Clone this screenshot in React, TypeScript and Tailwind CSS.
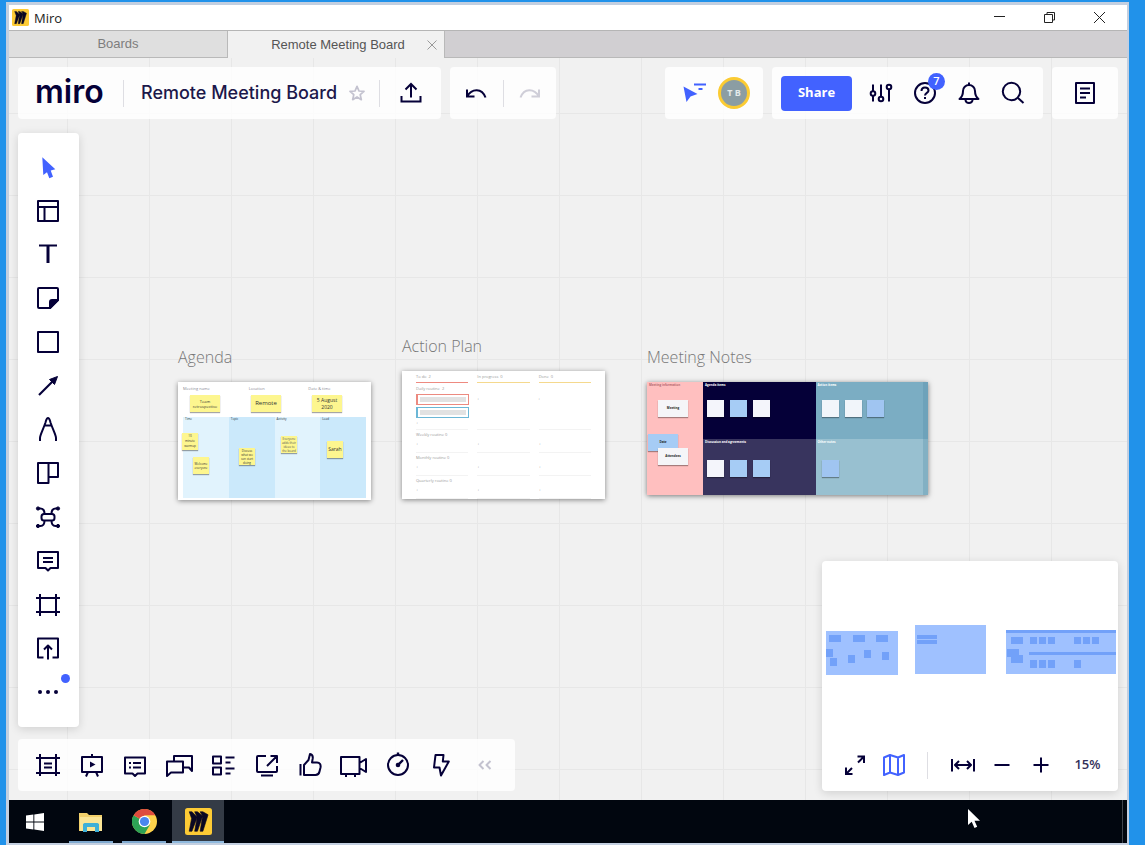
import type { ReactNode } from 'react';
import clsx from 'clsx';

type IconProps = { children: ReactNode; className?: string };

const Icon = ({ children, className = 'size-6' }: IconProps) => (
  <svg
    viewBox="0 0 24 24"
    fill="none"
    stroke="currentColor"
    strokeWidth="2"
    strokeLinejoin="round"
    className={clsx('shrink-0 overflow-visible', className)}
    aria-hidden="true"
  >
    {children}
  </svg>
);

const MiroMark = ({ className }: { className: string }) => (
  <svg viewBox="0 0 32 32" className={className} aria-hidden="true">
    <rect width="32" height="32" rx="3" fill="#fdcb35" />
    <path
      transform="translate(5 4.5) scale(.93 .96)"
      fill="#0a0722"
      stroke="#0a0722"
      strokeWidth=".8"
      d="M17.392 0H13.9L17 4.808 10.444 0H6.949l3.102 6.3L3.494 0H0l3.05 8.131L0 24h3.494L10.05 6.985 6.949 24h3.494L17 5.494 13.899 24h3.493L24 3.672 17.392 0z"
    />
  </svg>
);

const tools = [
  {
    name: 'Select',
    icon: (
      <path
        d="M6.3 2.3 19.3 14.3 14.7 15.4 17 21.7 13.3 23.3 11 17.3 7.3 20z"
        fill="#4262ff"
        stroke="none"
      />
    ),
  },
  { name: 'Templates', icon: <path d="M2 2h20v20H2zM2 8h20M8.5 8v14" /> },
  {
    name: 'Text',
    icon: (
      <>
        <path d="M3 3.5h18" />
        <path d="M12 3.5V21" strokeWidth="3" />
      </>
    ),
  },
  {
    name: 'Sticky note',
    icon: (
      <>
        <path d="M22 14V3a1 1 0 0 0-1-1H3a1 1 0 0 0-1 1v18a1 1 0 0 0 1 1h11z" />
        <path d="M22 14h-6a2 2 0 0 0-2 2v6z" fill="currentColor" />
      </>
    ),
  },
  { name: 'Shape', icon: <path d="M2 2h20v20H2z" /> },
  {
    name: 'Connection line',
    icon: (
      <>
        <path d="M3 21 17 7" strokeWidth="2.2" />
        <path d="M21.5 2.5 18.5 10.5 13.5 5.5z" fill="currentColor" strokeWidth="1" />
      </>
    ),
  },
  {
    name: 'Pen',
    icon: (
      <path d="M4 24v-3c0-3 3-8 5.5-15.5C10.2 3.2 10.5 1 12 1s1.8 2.2 2.5 4.5C17 13 20 18 20 21v3M8.5 8.5h7" />
    ),
  },
  { name: 'Kanban', icon: <path d="M12.5 16H22V2H2v20h10.5V2" /> },
  {
    name: 'Mind map',
    icon: (
      <>
        <rect x="5.5" y="9" width="13" height="6.5" rx="2.5" />
        <path d="M2 3.5h2.5c3 0 4 2 4 5.5M22 3.5h-2.500c-3 0-4 2-4 5.5M2 21h2.5c3 0 4-2 4-5.5M22 21h-2.500c-3 0-4-2-4-5.5" />
        <g fill="currentColor" strokeWidth="1">
          <circle cx="2" cy="3.5" r="1.6" />
          <circle cx="22" cy="3.5" r="1.6" />
          <circle cx="2" cy="21" r="1.6" />
          <circle cx="22" cy="21" r="1.6" />
        </g>
      </>
    ),
  },
  {
    name: 'Comment',
    icon: <path d="M2 3h20v16h-7.500L12 21.5 9.5 19H2zM7 9h10M7 13h10" />,
  },
  { name: 'Frame', icon: <path d="M0 5h24M0 19h24M4 1v22M20 1v22" /> },
  {
    name: 'Upload',
    icon: <path d="M7.5 21.5H2v-19h20v19h-5.500M12 23.5V10M8 13.5l4-4 4 4" />,
  },
  {
    name: 'More',
    icon: (
      <g fill="currentColor" stroke="none">
        <circle cx="4" cy="12" r="2" />
        <circle cx="12" cy="12" r="2" />
        <circle cx="20" cy="12" r="2" />
      </g>
    ),
    dot: true,
  },
];

const meetingTools = [
  { name: 'Frames', icon: <path d="M0 5h24M0 20h24M4 1v22M20 1v22M8 10.5h8M8 14.5h8" /> },
  {
    name: 'Present',
    icon: (
      <>
        <path d="M2 4h20v15H2zM12 1v3M8 19l-2 4.5M16 19l2 4.5" />
        <path d="M10 8.5v6l5.5-3z" fill="currentColor" stroke="none" />
      </>
    ),
  },
  {
    name: 'Comments',
    icon: <path d="M2 4.5h20v16h-7.500L12 23l-2.500-2.500H2zM6 10h2M10 10h8M6 14.5h2M10 14.5h8" />,
  },
  {
    name: 'Chat',
    icon: <path d="M7 8.5V3h18v15l-3-3.500h-6M0 8.500h16v11H4L0 23z" />,
  },
  {
    name: 'Cards',
    icon: (
      <path d="M2 3.5h8v7H2zM2 14.5h8v7H2zM14.5 4.5h9M14.5 9.5h5M14.5 15.5h9M14.5 20.5h5" />
    ),
  },
  {
    name: 'Screen sharing',
    icon: (
      <path d="M11 3H3a1 1 0 0 0-1 1v14a1 1 0 0 0 1 1h18a1 1 0 0 0 1-1v-5M12 13 22 3M15.5 3H22v7M6 22.5h12" />
    ),
  },
  {
    name: 'Voting',
    icon: (
      <path d="M2.5 11v11.5M6 22V12l4.5-5L12 1c2.600.5 3 2.500 2.700 4.500L14 9.500h5c3 0 4 2.500 3.500 5l-1 4c-.5 2.500-1.800 3.500-4 3.500z" />
    ),
  },
  {
    name: 'Video chat',
    icon: <path d="M-1 4h18.500v17H-1zM17.500 10l6.500-4v13l-6.500-4M4 21v3M13 21v3" />,
  },
  {
    name: 'Timer',
    icon: (
      <>
        <circle cx="12" cy="12" r="10" />
        <path d="M12 2V-.5M12 12l5-5" strokeWidth="2.4" />
        <circle cx="12" cy="12" r="2.3" fill="currentColor" stroke="none" />
      </>
    ),
  },
  {
    name: 'Activities',
    icon: <path d="M6.500 2h8l-.7 6.500h6L12 22.500 10.500 14.500H5z" />,
  },
  {
    name: 'Collapse',
    icon: <path d="M10.500 8l-4 4 4 4M17.500 8l-4 4 4 4" />,
    muted: true,
  },
];

const Divider = ({ className }: { className?: string }) => (
  <span className={clsx('h-[27px] w-px shrink-0 bg-[#dedee3]', className)} />
);

const Panel = ({ children, className }: IconProps) => (
  <div className={clsx('flex items-center rounded bg-white/85', className)}>{children}</div>
);

const IconButton = ({ label, children, className }: IconProps & { label: string }) => (
  <button
    type="button"
    aria-label={label}
    className={clsx('relative flex h-11 items-center justify-center', className)}
  >
    {children}
  </button>
);

const TitleBar = () => (
  <div className="flex h-[25px] shrink-0 items-center bg-white px-[3px]">
    <MiroMark className="size-[17px]" />
    <span className="ml-[5px] flex-1 text-[13px] leading-5 text-[#222]">Miro</span>
    {[
      ['Minimize', 'M1 5.5h11'],
      ['Restore', 'M1.5 3.5h8v8h-8zM4 3.5v-2h7.5V9h-2'],
      ['Close', 'M1 1l11 11M12 1 1 12'],
    ].map(([label, d]) => (
      <IconButton key={label} label={label} className="h-6 w-[50px]">
        <svg viewBox="0 0 13 13" className="size-[13px]" fill="none" stroke="#222" aria-hidden="true">
          <path d={d} />
        </svg>
      </IconButton>
    ))}
  </div>
);

const Tabs = () => (
  <nav className="flex h-7 shrink-0 border-t border-[#b5b5b5] bg-[#d1cfd2] font-['Liberation_Sans',sans-serif] text-[13px]">
    <a
      href="#boards"
      className="flex w-[219px] items-center justify-center border-r border-b border-[#b9b9b9] bg-[#dfdfdf] text-[#7d7d7d]"
    >
      Boards
    </a>
    <div className="flex w-[217px] items-center border-r border-[#b9b9b9] bg-[#f1f1f1]">
      <a href="#board" className="flex-1 pl-7 text-center text-[#555]">
        Remote Meeting Board
      </a>
      <button type="button" aria-label="Close tab" className="flex w-6 justify-center">
        <svg viewBox="0 0 10 10" className="size-[10px]" fill="none" stroke="#999" aria-hidden="true">
          <path d="M.5.5l9 9M9.5.5l-9 9" />
        </svg>
      </button>
    </div>
    <div className="flex-1 border-b border-[#b9b9b9]" />
  </nav>
);

const Note = ({ className, children }: { className: string; children?: ReactNode }) => (
  <div
    className={clsx(
      'absolute flex items-center justify-center text-center shadow-[0_1px_1px_rgba(0,0,0,0.35)]',
      className,
    )}
  >
    {children}
  </div>
);

const AgendaFrame = () => (
  <section className="absolute left-[169px] top-[289px] w-[193px]">
    <h2 className="mb-[15px] text-base leading-5 font-light text-[#777]">Agenda</h2>
    <div className="relative h-[118px] bg-white pt-1 text-[4px] leading-[5px] text-[#8a8a96] shadow-[0_1px_5px_rgba(0,0,0,0.45)]">
      <div className="grid grid-cols-3 pl-[5px]">
        <span>Meeting name</span>
        <span className="pl-[3px]">Location</span>
        <span>Date &amp; time</span>
      </div>
      <div className="absolute inset-x-[5px] top-[35px] bottom-[2px] grid grid-cols-4 text-[3px] text-[#234]">
        <span className="bg-[#e1f3fd] pl-0.5">Time</span>
        <span className="bg-[#cbe9fb] pl-0.5">Topic</span>
        <span className="bg-[#e1f3fd] pl-0.5">Activity</span>
        <span className="bg-[#cbe9fb] pl-0.5">Lead</span>
      </div>
      <Note className="left-3 top-[13px] h-[17px] w-[30px] bg-[#fdf68f] text-[4px] text-[#333]">
        Team
        <br />
        retrospective
      </Note>
      <Note className="left-[73px] top-[13px] h-[17px] w-[30px] bg-[#fdf68f] text-[6px] text-[#333]">
        Remote
      </Note>
      <Note className="left-[134px] top-[13px] h-[17px] w-[30px] bg-[#fdf68f] text-[5px] leading-[7px] text-[#333]">
        5 August
        <br />
        2020
      </Note>
      <Note className="left-1 top-[51px] h-[17px] w-4 bg-[#fdf68f] text-[3px] text-[#333]">
        10
        <br />
        minute
        <br />
        warmup
      </Note>
      <Note className="left-[15px] top-[75px] h-[17px] w-4 bg-[#fdf68f] text-[3px] leading-[4px] text-[#333]">
        Welcome
        <br />
        everyone
      </Note>
      <Note className="left-[61px] top-[66px] h-[17px] w-4 bg-[#fdf68f] text-[3px] leading-[4px] text-[#333]">
        Discuss
        <br />
        what we
        <br />
        can start
        <br />
        doing
      </Note>
      <Note className="left-[103px] top-[54px] h-[17px] w-4 bg-[#fdf68f] text-[3px] leading-[4px] text-[#555]">
        Everyone
        <br />
        adds their
        <br />
        ideas to
        <br />
        the board
      </Note>
      <Note className="left-[149px] top-[59px] h-[17px] w-4 bg-[#fdf68f] text-[5px] text-[#333]">
        Sarah
      </Note>
    </div>
  </section>
);

const PlanRow = ({ title }: { title: string }) => (
  <div className="mt-0.5">
    <p className="h-[9px]">{title}</p>
    <div className="grid grid-cols-3 gap-x-[9px]">
      {[0, 1, 2].map((i) => (
        <span key={i} className="h-3 border-b border-[#f3f3f3]">
          +
        </span>
      ))}
    </div>
  </div>
);

const ActionPlanFrame = () => (
  <section className="absolute left-[393px] top-[278px] w-[203px]">
    <h2 className="mb-[15px] text-base leading-5 font-light text-[#777]">Action Plan</h2>
    <div className="relative h-[128px] overflow-hidden bg-white px-[14px] pt-[3px] text-[4px] leading-[5px] text-[#999] shadow-[0_1px_5px_rgba(0,0,0,0.45)]">
      <div className="grid grid-cols-3 gap-x-[9px]">
        <span className="h-[9px] border-b border-[#ee8a80]">To do&nbsp; 2</span>
        <span className="h-[9px] border-b border-[#f5d98d]">In progress&nbsp; 0</span>
        <span className="h-[9px] border-b border-[#f5d98d]">Done&nbsp; 0</span>
      </div>
      <p className="mt-[3px] h-2">Daily routine&nbsp; 2</p>
      <div className="flex w-[53px] flex-col gap-0.5">
        <div className="h-[11px] border border-l-2 border-[#ec8a80] p-0.5">
          <div className="h-[5px] bg-[#e2e2e2]" />
        </div>
        <div className="h-[11px] border border-l-2 border-[#6cb7d6] p-0.5">
          <div className="h-[5px] bg-[#e2e2e2]" />
        </div>
      </div>
      <div className="mt-0.5 grid grid-cols-3 gap-x-[9px]">
        <span className="h-[10px] border-b border-[#f3f3f3]">+</span>
        <span className="h-[10px] border-b border-[#f3f3f3]" />
        <span className="h-[10px] border-b border-[#f3f3f3]" />
      </div>
      <PlanRow title="Weekly routine  0" />
      <PlanRow title="Monthly routine  0" />
      <PlanRow title="Quarterly routine  0" />
      <span className="absolute left-[75px] top-[25px]">+</span>
      <span className="absolute left-[136px] top-[25px]">+</span>
    </div>
  </section>
);

const notesSquares = [
  'left-[60px] top-[18px] bg-[#f4f5fb]',
  'left-[83px] top-[18px] bg-[#a6ccf5]',
  'left-[106px] top-[18px] bg-[#f4f5fb]',
  'left-[175px] top-[18px] bg-[#f1f5fa]',
  'left-[198px] top-[18px] bg-[#f1f5fa]',
  'left-[220px] top-[18px] bg-[#a0c5f1]',
  'left-[60px] top-[78px] bg-[#f4f5fb]',
  'left-[83px] top-[78px] bg-[#a6ccf5]',
  'left-[106px] top-[78px] bg-[#a6ccf5]',
  'left-[175px] top-[78px] bg-[#a0c5f1]',
];

const MeetingNotesFrame = () => (
  <section className="absolute left-[638px] top-[289px] w-[281px]">
    <h2 className="mb-[15px] text-base leading-5 font-light text-[#777]">Meeting Notes</h2>
    <div className="relative flex h-[113px] text-[3px] leading-[5px] font-bold text-white shadow-[0_1px_5px_rgba(0,0,0,0.5)]">
      <div className="w-[56px] bg-[#ffbfbf] pl-0.5 pt-px text-[#b36a70]">Meeting information</div>
      <div className="grid flex-1 grid-cols-2 grid-rows-2">
        <span className="bg-[#050038] pl-0.5 pt-px">Agenda items</span>
        <span className="bg-[#7badc3] pl-0.5 pt-px">Action items</span>
        <span className="bg-[#38345e] pl-0.5 pt-px">Discussion and agreements</span>
        <span className="bg-[#98c0d0] pl-0.5 pt-px">Other notes</span>
      </div>
      <div className="absolute inset-y-0 right-0 w-[5px] bg-[#4f8ca5]/30" />
      {notesSquares.map((square) => (
        <Note key={square} className={clsx('size-[17px]', square)} />
      ))}
      <Note className="left-[11px] top-[18px] h-[17px] w-[30px] bg-[#f5f5f8] text-[#222]">Meeting</Note>
      <Note className="left-px top-[52px] h-[17px] w-[30px] bg-[#a6ccf5] text-[#222]">Date</Note>
      <Note className="left-[11px] top-[66px] h-[17px] w-[30px] bg-[#f5f5f8] text-[#222]">Attendees</Note>
    </div>
  </section>
);

const TopBar = () => (
  <header className="flex h-[52px] shrink-0 gap-[9px]">
    <Panel>
      <a
        href="#home"
        className="w-[105px] pb-0.5 pl-[17px] font-['Inter',sans-serif] text-[32px] leading-10 font-semibold text-[#050038]"
      >
        miro
      </a>
      <Divider />
      <h1 className="ml-[17px] w-[200px] font-['Inter',sans-serif] text-lg font-medium whitespace-nowrap text-[#1c184a]">
        Remote Meeting Board
      </h1>
      <IconButton label="Add to favourites" className="w-8 text-[#c3c2cf]">
        <Icon className="size-4">
          <path
            d="M12 2l3 7 7.5.5-5.7 5L18.5 22 12 18l-6.5 4 1.7-7.500-5.700-5L9 9z"
            strokeWidth="2.6"
          />
        </Icon>
      </IconButton>
      <Divider className="ml-[6px]" />
      <IconButton label="Export this board" className="w-[61px]">
        <Icon>
          <path d="M2.5 15v5.5h19V15M12 16.5V3M6.5 8.5 12 3l5.5 5.5" strokeLinejoin="miter" />
        </Icon>
      </IconButton>
    </Panel>
    <Panel className="w-[106px]">
      <IconButton label="Undo" className="flex-1">
        <Icon>
          <path d="M3 15.5C8 7 18 7 21.5 16.5M3 8.5v7h7.5" strokeLinejoin="miter" />
        </Icon>
      </IconButton>
      <Divider />
      <IconButton label="Redo" className="flex-1 text-[#cfced8]">
        <Icon>
          <path d="M21 15.5C16 7 6 7 2.5 16.5M21 8.5v7h-7.500" strokeLinejoin="miter" />
        </Icon>
      </IconButton>
    </Panel>
    <Panel className="ml-auto w-[98px] pr-[13px] pl-[7px]">
      <IconButton label="Hide collaborators' cursors" className="flex-1 text-[#4262ff]">
        <Icon>
          <path d="M.5 5.5 14.5 13 7.5 15.5 3.5 21z" fill="currentColor" stroke="none" />
          <path d="M11 3.5h12M15.5 8h4" />
        </Icon>
      </IconButton>
      <button
        type="button"
        className="flex size-8 items-center justify-center rounded-full border-[3px] border-[#fbcb33] bg-[#8b9da3] text-[9px] font-bold text-[#e3eaea]"
      >
        T B
      </button>
    </Panel>
    <Panel className="w-[271px] pl-[9px]">
      <button
        type="button"
        className="mr-[7px] h-[35px] w-[71px] rounded bg-[#4262ff] text-[13px] font-bold text-white"
      >
        Share
      </button>
      <IconButton label="Settings" className="w-11">
        <Icon>
          <path d="M4 3.500v6.500M4 15v5.5M12 3.5V15M20 9v11.5" />
          <circle cx="4" cy="12.5" r="2.3" />
          <circle cx="12" cy="18" r="2.3" />
          <circle cx="20" cy="6" r="2.3" />
        </Icon>
      </IconButton>
      <IconButton label="Help, 7 new" className="w-11">
        <Icon>
          <circle cx="12" cy="12" r="10" />
          <path d="M8.5 10c0-2 1.5-3.500 3.500-3.500s3.500 1.400 3.500 3.200c0 2.200-3.500 2.300-3.500 4.800M12 16v2" />
        </Icon>
        <span className="absolute top-0.5 right-0.5 flex size-[17px] items-center justify-center rounded-full bg-[#4262ff] text-[11px] font-semibold text-white">
          7
        </span>
      </IconButton>
      <IconButton label="Notifications" className="w-11">
        <Icon>
          <path d="M2.5 18c2.500-2 3.500-4 3.500-8a6 6 0 0 1 12 0c0 4 1 6 3.500 8zM12 4V1.500" />
          <path d="M8.5 19a3.5 3 0 0 0 7 0" />
        </Icon>
      </IconButton>
      <IconButton label="Search" className="w-[43px]">
        <Icon>
          <circle cx="10.5" cy="10.5" r="8.7" />
          <path d="M17 17l5.5 5" />
        </Icon>
      </IconButton>
    </Panel>
    <Panel className="w-[66px] justify-center">
      <IconButton label="Notes" className="w-11">
        <Icon>
          <path d="M3 2h18v20H3zM7 7.5h10M7 12h10M7 16.5h6" />
        </Icon>
      </IconButton>
    </Panel>
  </header>
);

const mapBlocks = [
  // agenda
  [7, 74, 12, 7],
  [31, 74, 12, 7],
  [54, 74, 12, 7],
  [4, 88, 7, 8],
  [8, 97, 7, 8],
  [26, 94, 7, 8],
  [42, 89, 7, 8],
  [60, 91, 7, 8],
  // action plan
  [95, 74, 20, 4],
  [95, 79, 20, 4],
  // meeting notes
  [189, 76, 12, 7],
  [185, 88, 12, 8],
  [189, 94, 12, 8],
  [208, 76, 7, 7],
  [217, 76, 7, 7],
  [226, 76, 7, 7],
  [252, 76, 7, 7],
  [261, 76, 7, 7],
  [270, 76, 7, 7],
  [208, 99, 7, 8],
  [217, 99, 7, 8],
  [226, 99, 7, 8],
  [252, 99, 7, 8],
  [184, 69, 110, 3],
  [207, 91, 87, 3],
];

const MiniMap = () => (
  <aside className="w-[296px] self-end rounded bg-white shadow-[0_2px_10px_rgba(0,0,0,0.14)]">
    <svg viewBox="0 0 296 178" className="block w-full" role="img" aria-label="Board map">
      <g fill="#9fc1ff">
        <rect x="4" y="70" width="72" height="44" />
        <rect x="93" y="64" width="71" height="49" />
        <rect x="184" y="69" width="110" height="44" />
      </g>
      <g fill="#4f87f5" opacity=".55">
        {mapBlocks.map(([x, y, width, height]) => (
          <rect key={`${x}-${y}`} x={x} y={y} width={width} height={height} />
        ))}
      </g>
    </svg>
    <div className="flex h-[52px] items-center pl-[13px]">
      <IconButton label="Full screen" className="w-[39px]">
        <Icon>
          <path d="M15 9.5l6-6M14.5 3.5H21V10M9 15l-6 6M3 14.5V21h6.5" strokeLinejoin="miter" />
        </Icon>
      </IconButton>
      <IconButton label="Toggle map" className="w-[39px] text-[#4262ff]">
        <Icon>
          <path d="M2 4.5 8 2l8 2.5L22 2v17.5L16 22l-8-2.500L2 22zM8 2v17.5M16 4.5V22" />
        </Icon>
      </IconButton>
      <Divider className="mr-[15px] ml-[14px]" />
      <IconButton label="Fit to screen" className="w-[39px]">
        <Icon>
          <path d="M1 6v12.5M23 6v12.5M4 12h16M8 8l-4 4 4 4M16 8l4 4-4 4" />
        </Icon>
      </IconButton>
      <IconButton label="Zoom out" className="w-[39px]">
        <Icon>
          <path d="M4.5 12h15" />
        </Icon>
      </IconButton>
      <IconButton label="Zoom in" className="w-[39px]">
        <Icon>
          <path d="M4.5 12h15M12 4.5v15" />
        </Icon>
      </IconButton>
      <button type="button" className="flex-1 pr-[3px] text-[13px] font-semibold text-[#33305a]">
        15%
      </button>
    </div>
  </aside>
);

const TaskBar = () => (
  <footer className="relative flex h-[43px] shrink-0 bg-[#01060f]">
    <IconButton label="Start" className="h-full w-[52px]">
      <svg viewBox="0 0 18 18" className="size-[18px]" fill="#fff" aria-hidden="true">
        <path d="M0 2.6 7.4 1.5v7H0zM8.300 1.400 18 0v8.500H8.300zM0 9.400h7.400v7L0 15.400zM8.300 9.400H18V18l-9.700-1.400z" />
      </svg>
    </IconButton>
    <IconButton label="File Explorer" className="ml-1 h-full w-[52px]">
      <svg viewBox="0 0 24 20" className="h-5 w-6" aria-hidden="true">
        <path d="M0 1h8l2 2h13v16H0z" fill="#f2d06b" />
        <path d="M1 5h22v14H1z" fill="#fbe596" />
        <path d="M4 20v-8l1.5-1h13l1.5 1v8h-4v-5H8v5z" fill="#3fb0d8" />
      </svg>
      <span className="absolute bottom-0 h-0.5 w-11 bg-[#7fa9cf]" />
    </IconButton>
    <IconButton label="Chrome" className="ml-px h-full w-[52px]">
      <svg viewBox="0 0 24 24" className="size-[25px]" aria-hidden="true">
        <circle cx="12" cy="12" r="12" fill="#fdd24b" />
        <path d="M1.6 6A12 12 0 0 0 12 24l5.2-9-5.200-3z" fill="#2da255" />
        <path d="M12 12 1.6 6A12 12 0 0 1 22.4 6H12z" fill="#de4c3e" />
        <circle cx="12" cy="12" r="5.6" fill="#fff" />
        <circle cx="12" cy="12" r="4.4" fill="#4a86ee" />
      </svg>
      <span className="absolute bottom-0 h-0.5 w-11 bg-[#7fa9cf]" />
    </IconButton>
    <IconButton label="Miro" className="ml-0.5 h-full w-[52px] bg-[#343b46]">
      <MiroMark className="size-[27px]" />
      <span className="absolute inset-x-0 bottom-0 h-0.5 bg-[#8fb9dd]" />
    </IconButton>
    <span className="mr-1 ml-auto w-px bg-[#3f454f]" />
    <svg
      viewBox="0 0 12 20"
      className="absolute top-[9px] right-[147px] h-5 w-3"
      fill="#fff"
      aria-hidden="true"
    >
      <path d="M0 0v16l3.7-3.300L6.500 19l2.700-1.200-2.700-6H12z" />
    </svg>
  </footer>
);

export default function App() {
  return (
    <div className="flex h-screen bg-[#2192ea] pt-0.5 pr-4 pl-1.5 font-['Open_Sans','Noto_Sans',sans-serif] text-[#050038]">
      <div className="flex min-w-0 flex-1 flex-col border-[3px] border-r-2 border-b-2 border-[#c3cfe0]">
        <TitleBar />
        <Tabs />
        <main className="relative min-h-0 flex-1 overflow-hidden bg-[#f1f1f1] bg-[linear-gradient(to_right,#e7e7e7_1px,transparent_1px),linear-gradient(to_bottom,#e7e7e7_1px,transparent_1px)] bg-size-[82px_82px] bg-position-[58px_55px]">
          <AgendaFrame />
          <ActionPlanFrame />
          <MeetingNotesFrame />

          {/* board controls float over the canvas */}
          <div className="absolute inset-0 flex flex-col p-[9px]">
            <TopBar />
            <div className="flex min-h-0 flex-1 justify-between pt-[14px]">
              <div className="flex flex-col gap-3">
                <div className="flex w-[61px] flex-1 flex-col rounded bg-white pt-3 pr-px pb-[13px] shadow-[0_2px_10px_rgba(0,0,0,0.14)]">
                  {tools.map(({ name, icon, dot }) => (
                    <IconButton key={name} label={name} className="flex-1">
                      <Icon>{icon}</Icon>
                      {dot && (
                        <span className="absolute top-1 right-2 size-[9px] rounded-full bg-[#4262ff]" />
                      )}
                    </IconButton>
                  ))}
                </div>
                <Panel className="h-[52px] w-[497px] px-2">
                  {meetingTools.map(({ name, icon, muted }) => (
                    <IconButton
                      key={name}
                      label={name}
                      className={clsx('flex-1', muted && 'text-[#c3c2cf]')}
                    >
                      <Icon>{icon}</Icon>
                    </IconButton>
                  ))}
                </Panel>
              </div>
              <MiniMap />
            </div>
          </div>
        </main>
        <TaskBar />
      </div>
    </div>
  );
}
